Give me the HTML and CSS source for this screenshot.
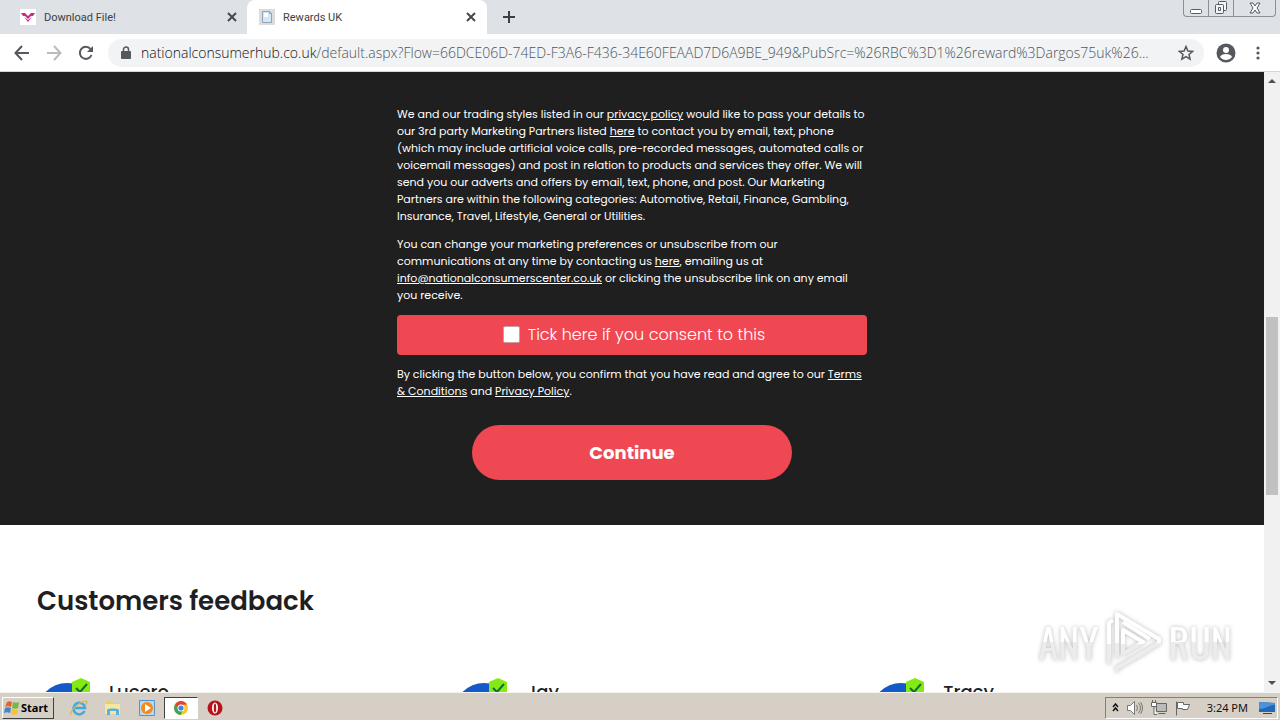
FILE: index.html
```html
<!DOCTYPE html>
<html lang="en">
<head>
    <meta charset="UTF-8">
    <meta name="viewport" content="width=device-width, initial-scale=1">
    <title>Rewards UK</title>
    <link rel="stylesheet" href="styles.css">
</head>
<body>
    <header class="tab-strip">
        <div class="tab">
            <svg class="favicon" viewBox="0 0 16 16"><path fill="#fff" d="M0 0h16v16H0z"/><path fill="#c72c82" d="M1 4h4l3 3 3-3h4l-2 3h-2L8 10 5 7H3zM4 8l4 5 4-5-4 3z"/></svg>
            <span class="tab-title">Download File!</span>
            <button class="icon-btn" aria-label="Close Download File!"><svg width="10" height="10" viewBox="0 0 10 10"><path d="M1 1l8 8M9 1L1 9" stroke="#45494d" stroke-width="2"/></svg></button>
        </div>
        <div class="tab active">
            <svg class="favicon" viewBox="0 0 16 16"><path fill="#dcdcdc" d="M0 0h16v16H0z"/><path fill="#d5e7f5" stroke="#8ea4b8" d="M3.500 2.500h7l2 2v9h-9z"/><path fill="#fff" d="M5 4h4v4H5z"/><path fill="none" stroke="#8ea4b8" d="M10.500 2.500v2h2"/></svg>
            <span class="tab-title">Rewards UK</span>
            <button class="icon-btn" aria-label="Close Rewards UK"><svg width="10" height="10" viewBox="0 0 10 10"><path d="M1 1l8 8M9 1L1 9" stroke="#45494d" stroke-width="2"/></svg></button>
        </div>
        <button class="icon-btn new-tab" aria-label="New tab"><svg width="12" height="12" viewBox="0 0 12 12"><path d="M6 0v12M0 6h12" stroke="#3c4043" stroke-width="2"/></svg></button>
        <div class="window-controls">
            <button aria-label="Minimize"><svg width="12" height="14" viewBox="0 0 12 14"><rect x=".5" y="8.500" width="11" height="4" rx="1" fill="#fff" stroke="#555b66"/></svg></button>
            <button aria-label="Restore"><svg width="14" height="14" viewBox="0 0 14 14" fill="#f4f5f7" stroke="#555b66"><rect x="4.500" y=".5" width="8" height="9" rx="1"/><rect x="1.500" y="3.500" width="8" height="9" rx="1"/><path d="M4.500 6.500h2v3h-2z"/></svg></button>
            <button class="wide" aria-label="Close"><svg width="12" height="12" viewBox="0 0 12 12"><path d="M1 1h3l2 3 2-3h3L8 6l3 5H8L6 8l-2 3H1l3-5z" fill="#fff" stroke="#555b66"/></svg></button>
        </div>
    </header>

    <nav class="toolbar">
        <button class="icon-btn" aria-label="Back"><svg width="16" height="16" viewBox="0 0 16 16" fill="none" stroke="#55595e" stroke-width="2"><path d="M15 8H2M8 1L1.500 8 8 15"/></svg></button>
        <button class="icon-btn" aria-label="Forward"><svg width="16" height="16" viewBox="0 0 16 16" fill="none" stroke="#b9bbbe" stroke-width="2"><path d="M1 8h13M8 1l6.500 7L8 15"/></svg></button>
        <button class="icon-btn" aria-label="Reload"><svg width="16" height="16" viewBox="0 0 16 16"><path d="M13.500 10A6 6 0 1 1 12.500 4" fill="none" stroke="#55595e" stroke-width="2"/><path d="M15 1v6H9z" fill="#55595e"/></svg></button>
        <div class="address">
            <svg width="10" height="14" viewBox="0 0 10 14"><rect y="5" width="10" height="8" rx="1" fill="#55595e"/><path d="M2.500 6V3.500a2.500 2.500 0 0 1 5 0V6" fill="none" stroke="#55595e" stroke-width="1.500"/></svg>
            <div class="url"><span>nationalconsumerhub.co.uk</span>/default.aspx?Flow=66DCE06D-74ED-F3A6-F436-34E60FEAAD7D6A9BE_949&amp;PubSrc=%26RBC%3D1%26reward%3Dargos75uk%26...</div>
            <button class="icon-btn" aria-label="Bookmark this page"><svg width="16" height="16" viewBox="0 0 16 16"><path d="M8 1.500l1.900 4.500 4.700.4-3.600 3.100 1.100 4.700L8 11.700l-4.100 2.500L5 9.500 1.400 6.400 6.100 6z" fill="none" stroke="#55595e" stroke-width="1.500"/></svg></button>
        </div>
        <button class="icon-btn" aria-label="Profile"><svg width="20" height="20" viewBox="0 0 20 20"><circle cx="10" cy="10" r="9.500" fill="#55595e"/><circle cx="10" cy="7" r="3" fill="#fff"/><path d="M4 14c1-4 11-4 12 0-3 4-9 4-12 0z" fill="#fff"/></svg></button>
        <button class="icon-btn menu" aria-label="Menu"><svg width="4" height="14" viewBox="0 0 4 14" fill="#55595e"><circle cx="2" cy="2" r="1.600"/><circle cx="2" cy="7" r="1.600"/><circle cx="2" cy="12" r="1.600"/></svg></button>
    </nav>

    <div class="viewport">
        <main class="page">
            <section class="consent">
                <form class="consent-form">
                    <p>We and our trading styles listed in our <a href="#">privacy policy</a> would like to pass your details to<br>
                    our 3rd party Marketing Partners listed <a href="#">here</a> to contact you by email, text, phone<br>
                    (which may include artificial voice calls, pre-recorded messages, automated calls or<br>
                    voicemail messages) and post in relation to products and services they offer. We will<br>
                    send you our adverts and offers by email, text, phone, and post. Our Marketing<br>
                    Partners are within the following categories: Automotive, Retail, Finance, Gambling,<br>
                    Insurance, Travel, Lifestyle, General or Utilities.</p>
                    <p>You can change your marketing preferences or unsubscribe from our<br>
                    communications at any time by contacting us <a href="#">here</a>, emailing us at<br>
                    <a href="#">info@nationalconsumerscenter.co.uk</a> or clicking the unsubscribe link on any email<br>
                    you receive.</p>
                    <label class="tick"><input type="checkbox"> Tick here if you consent to this</label>
                    <p>By clicking the button below, you confirm that you have read and agree to our <a href="#">Terms<br>
                    &amp; Conditions</a> and <a href="#">Privacy Policy</a>.</p>
                    <button type="button" class="continue">Continue</button>
                </form>
            </section>
            <section class="feedback">
                <h2>Customers feedback</h2>
                <div class="customers">
                    <article class="customer">
                        <div class="avatar"><svg class="shield" viewBox="0 0 20 22"><path d="M10 0l9 4v9c0 4-5 7-9 9-4-2-9-5-9-9V4z" fill="#83ea13"/><path d="M5 10l4 4 7-8" fill="none" stroke="#176b3a" stroke-width="2"/></svg></div>
                        <h3>Lucero</h3>
                    </article>
                    <article class="customer">
                        <div class="avatar"><svg class="shield" viewBox="0 0 20 22"><path d="M10 0l9 4v9c0 4-5 7-9 9-4-2-9-5-9-9V4z" fill="#83ea13"/><path d="M5 10l4 4 7-8" fill="none" stroke="#176b3a" stroke-width="2"/></svg></div>
                        <h3>Jay</h3>
                    </article>
                    <article class="customer">
                        <div class="avatar"><svg class="shield" viewBox="0 0 20 22"><path d="M10 0l9 4v9c0 4-5 7-9 9-4-2-9-5-9-9V4z" fill="#83ea13"/><path d="M5 10l4 4 7-8" fill="none" stroke="#176b3a" stroke-width="2"/></svg></div>
                        <h3>Tracy</h3>
                    </article>
                </div>
            </section>
        </main>
        <div class="scrollbar">
            <svg width="8" height="4" viewBox="0 0 8 4"><path d="M0 4l4-4 4 4z" fill="#505050"/></svg>
            <div class="track"><div class="thumb"></div></div>
            <svg width="8" height="4" viewBox="0 0 8 4"><path d="M0 0l4 4 4-4z" fill="#505050"/></svg>
        </div>
        <div class="watermark">
            <span>ANY</span>
            <svg width="58" height="64" viewBox="0 0 58 64" fill="none" stroke="url(#fade)" stroke-width="4" stroke-linejoin="round">
                <defs><linearGradient id="fade" x1="0" y1="0" x2="0" y2="1"><stop offset=".5" stop-color="#fff"/><stop offset=".5" stop-color="#ececec"/></linearGradient></defs>
                <path d="M13 48V4l42 25v4L13 58v4"/>
                <path d="M9 10l-4 3v41M19 12l27 17M19 20v24l20-12zM13 58l28-16"/>
            </svg>
            <span>RUN</span>
        </div>
    </div>

    <footer class="taskbar">
        <button class="start">
            <svg width="16" height="16" viewBox="0 0 16 16"><path d="M3 2c2-1 3-1 5 0L7 7c-2-1-4-1-6 0z" fill="#e8632b"/><path d="M9 2c2 1 4 1 6 0l-1 6c-2 1-4 1-6 0z" fill="#75b843"/><path d="M1 8c2-1 4-1 6 0l-1 5c-2-1-4-1-6 0z" fill="#3b88ce"/><path d="M8 9c2 1 4 1 6 0l-1 5c-2 1-4 1-6 0z" fill="#f6c432"/></svg>
            Start
        </button>
        <div class="launchers">
            <button aria-label="Internet Explorer"><svg width="18" height="18" viewBox="0 0 18 18" fill="none"><path d="M14.500 12A5.800 5.800 0 1 1 15 9H5" stroke="#42a9df" stroke-width="2.500"/><path d="M1 16C-1 13 9 2 16 2c2 1 0 3-1 4" stroke="#d9b64a" stroke-width="1.200"/></svg></button>
            <button aria-label="Explorer"><svg width="18" height="18" viewBox="0 0 18 18"><path d="M2 2h6l1 2h6v4H2z" fill="#e9cf6b"/><path d="M1 5h15v10H1z" fill="#f5e6a0"/><path d="M3 16v-5c0-2 12-2 12 0v5h-3v-4H6v4z" fill="#58b2db"/></svg></button>
            <button aria-label="Media Player"><svg width="18" height="18" viewBox="0 0 18 18"><path d="M1.500 1.500h15v15h-15z" fill="#b9d9f3" stroke="#5792c7"/><circle cx="9" cy="9" r="6" fill="#f28a1c"/><path d="M7 5l6 4-6 4z" fill="#fff"/></svg></button>
            <button class="running" aria-label="Chrome"><svg width="14" height="14" viewBox="0 0 14 14"><circle cx="7" cy="7" r="7" fill="#f6c927"/><path d="M1 3.500A7 7 0 0 1 13 3.500L7 4 5 9z" fill="#df4535"/><path d="M1 3.500A7 7 0 0 0 6.500 14L9 9H5z" fill="#3ba457"/><circle cx="7" cy="7" r="3.500" fill="#fff"/><circle cx="7" cy="7" r="2.600" fill="#4383e8"/></svg></button>
            <button aria-label="Opera"><svg width="16" height="16" viewBox="0 0 16 16"><circle cx="8" cy="8" r="7.500" fill="#b91319"/><ellipse cx="8" cy="8" rx="3" ry="5.500" fill="#fff"/><ellipse cx="8" cy="8" rx="1.200" ry="4.500" fill="#b91319"/></svg></button>
        </div>
        <div class="tray">
            <svg width="7" height="9" viewBox="0 0 7 9" fill="none" stroke="#111" stroke-width="1.500"><path d="M1 4l2.500-3L6 4M1 8l2.500-3L6 8"/></svg>
            <svg width="16" height="16" viewBox="0 0 16 16" stroke="#777"><path d="M.5 5.500h3l4-4v13l-4-4h-3z" fill="#fff"/><path d="M9.500 5q2 3 0 6M11.500 3q4 5 0 10M13.500 2q4 6 0 12" fill="none"/></svg>
            <svg width="16" height="16" viewBox="0 0 16 16" stroke="#666"><path d="M5.500 3.500h10v8h-10zM7.500 13.500h7" fill="#bbb"/><path d="M.5 2.500h5v4h-5zM1.500 0v2M4.500 0v2M3 6.500v8h3" fill="#fff"/></svg>
            <svg width="16" height="16" viewBox="0 0 16 16"><path d="M1.500 1.500v14M2.500 2.500h6v2h6l-2 5h-5v-1h-5z" fill="#fff" stroke="#666"/></svg>
            <time>3:24 PM</time>
            <svg width="16" height="14" viewBox="0 0 16 14"><path d="M0 1l16 1v9H0z" fill="#2467b5"/><path d="M0 1l16 1v2C9 4 8 8 0 8z" fill="#4d91d8"/><path d="M4 12h9v1H4z" fill="#345"/></svg>
        </div>
    </footer>
</body>
</html>
```

FILE: styles.css
```css
:root {
    --strip: #dee1e6;
    --dark: #1f1f1f;
    --red: #ef4853;
    --taskbar: #d5cfc6;
    --poppins: Poppins, Inter, sans-serif;
}
* {
    box-sizing: border-box;
}
body {
    margin: 0;
    height: 100vh;
    display: flex;
    flex-direction: column;
    overflow: hidden;
    font-family: Tahoma, "Noto Sans", sans-serif;
    font-size: 11px;
    color: #3c4043;
}
svg {
    display: block;
    flex: none;
}
button {
    font-family: inherit;
    cursor: pointer;
}
.icon-btn {
    border: none;
    background: none;
    padding: 0;
}

/* browser chrome */
.tab-strip {
    display: flex;
    flex: none;
    height: 34px;
    background: var(--strip);
}
.tab {
    display: flex;
    align-items: center;
    gap: 8px;
    width: 240px;
    padding: 0 11px 0 12px;
    border-radius: 8px 8px 0 0;
}
.tab:first-child {
    width: 247px;
    padding: 0 10px 0 20px;
}
.tab.active {
    background: #fff;
}
.favicon {
    width: 16px;
    height: 16px;
}
.tab-title {
    flex: 1;
    font-family: Roboto, sans-serif;
}
.new-tab {
    padding: 0 16px;
}
.window-controls {
    display: flex;
    height: 17px;
    margin: 0 4px 0 auto;
    border: 1px solid #8a8f9a;
    border-top: none;
    border-radius: 0 0 4px 4px;
}
.window-controls button {
    display: flex;
    align-items: center;
    justify-content: center;
    width: 25px;
    padding: 0;
    border: none;
    border-right: 1px solid #8a8f9a;
    background: none;
}
.window-controls .wide {
    width: 41px;
    border-right: none;
}
.toolbar {
    display: flex;
    flex: none;
    align-items: center;
    gap: 16px;
    height: 38px;
    padding: 0 20px 0 14px;
    border-bottom: 1px solid #d4d6d9;
    background: #fff;
}
.address {
    display: flex;
    flex: 1;
    align-items: center;
    gap: 10px;
    min-width: 0;
    height: 28px;
    margin: 0 -4px 0 -2px;
    padding: 0 10px 0 13px;
    border-radius: 14px;
    background: #f1f3f4;
}
.url {
    flex: 1;
    overflow: hidden;
    white-space: nowrap;
    font-family: "Open Sans", sans-serif;
    font-size: 14px;
    font-weight: 300;
    color: #50545a;
}
.url span {
    color: #111;
}
.menu {
    padding: 0 0 0 4px;
}

/* page */
.viewport {
    position: relative;
    display: flex;
    flex: 1;
    min-height: 0;
    background: #fff;
}
.page {
    flex: 1;
    overflow: hidden;
    font-family: var(--poppins);
}
.consent {
    padding: 34px 16px 45px;
    background: var(--dark);
    color: #fff;
}
.consent-form {
    display: flex;
    flex-direction: column;
    gap: 11px;
    max-width: 470px;
    margin: 0 auto;
    line-height: 17px;
}
.consent-form p {
    margin: 0;
    white-space: nowrap;
}
.consent-form a {
    color: inherit;
}
.tick {
    display: flex;
    align-items: center;
    justify-content: center;
    gap: 8px;
    height: 40px;
    padding: 0 0 2px 4px;
    border-radius: 4px;
    background: var(--red);
    font-size: 16px;
    font-weight: 300;
}
.tick input {
    appearance: none;
    width: 17px;
    height: 17px;
    margin: 0;
    border: 1px solid #c9a0a0;
    border-radius: 2px;
    background: #fff;
}
.continue {
    align-self: center;
    width: 320px;
    height: 55px;
    margin-top: 14px;
    border: none;
    border-radius: 28px;
    background: var(--red);
    color: #fff;
    font-size: 18px;
    font-weight: 700;
}
.feedback {
    padding: 56px 0 0 37px;
    color: #1f1f1f;
}
.feedback h2 {
    margin: 0 0 62px;
    font-size: 26px;
    line-height: 40px;
    font-weight: 600;
}
.customers {
    display: flex;
}
.customer {
    display: flex;
    flex: 0 0 34%;
    gap: 12px;
}
.avatar {
    position: relative;
    width: 60px;
    height: 60px;
    border-radius: 50%;
    background: #1459c7;
}
.shield {
    position: absolute;
    top: -5px;
    right: 6px;
    width: 20px;
    height: 22px;
}
.customer h3 {
    margin: 0;
    font-size: 18px;
    line-height: 18px;
    font-weight: 500;
}
.scrollbar {
    display: flex;
    flex-direction: column;
    align-items: center;
    width: 16px;
    padding: 7px 0;
    background: #f1f1f1;
}
.track {
    flex: 1;
    width: 12px;
    padding: 234px 0 0;
}
.thumb {
    height: 178px;
    background: #c1c1c1;
}
.watermark {
    position: absolute;
    right: 48px;
    bottom: 18px;
    display: flex;
    align-items: center;
    gap: 6px;
    filter: drop-shadow(0 0 2px #bbb);
    pointer-events: none;
}
.watermark span {
    font-family: Oswald, "Bebas Neue", "Roboto Condensed", "Liberation Sans", sans-serif;
    font-size: 40px;
    line-height: 64px;
    color: transparent;
    background: linear-gradient(#fff 50%, #ececec 50%);
    background-clip: text;
}

/* taskbar */
.taskbar {
    display: flex;
    flex: none;
    align-items: center;
    height: 28px;
    padding: 2px 2px 0;
    border-top: 1px solid #f5f3ef;
    background: var(--taskbar);
    color: #111;
}
.start {
    display: flex;
    align-items: center;
    gap: 1px;
    width: 52px;
    height: 22px;
    padding: 0 1px;
    border: 1px solid;
    border-color: #fff #404040 #404040 #fff;
    background: var(--taskbar);
    font-size: 11px;
    font-weight: 700;
}
.launchers {
    display: flex;
    align-items: center;
    margin-left: 8px;
}
.launchers button {
    display: flex;
    align-items: center;
    justify-content: center;
    width: 34px;
    height: 22px;
    padding: 0;
    border: none;
    background: none;
}
.launchers .running {
    border: 1px solid;
    border-color: #404040 #fff #fff #404040;
    background: #fff;
}
.tray {
    display: flex;
    align-items: center;
    gap: 8px;
    height: 22px;
    margin-left: auto;
    padding: 0 2px 0 6px;
    border: 1px solid;
    border-color: #808080 #fff #fff #808080;
}
.tray time {
    padding: 0 3px 0 8px;
}
```
